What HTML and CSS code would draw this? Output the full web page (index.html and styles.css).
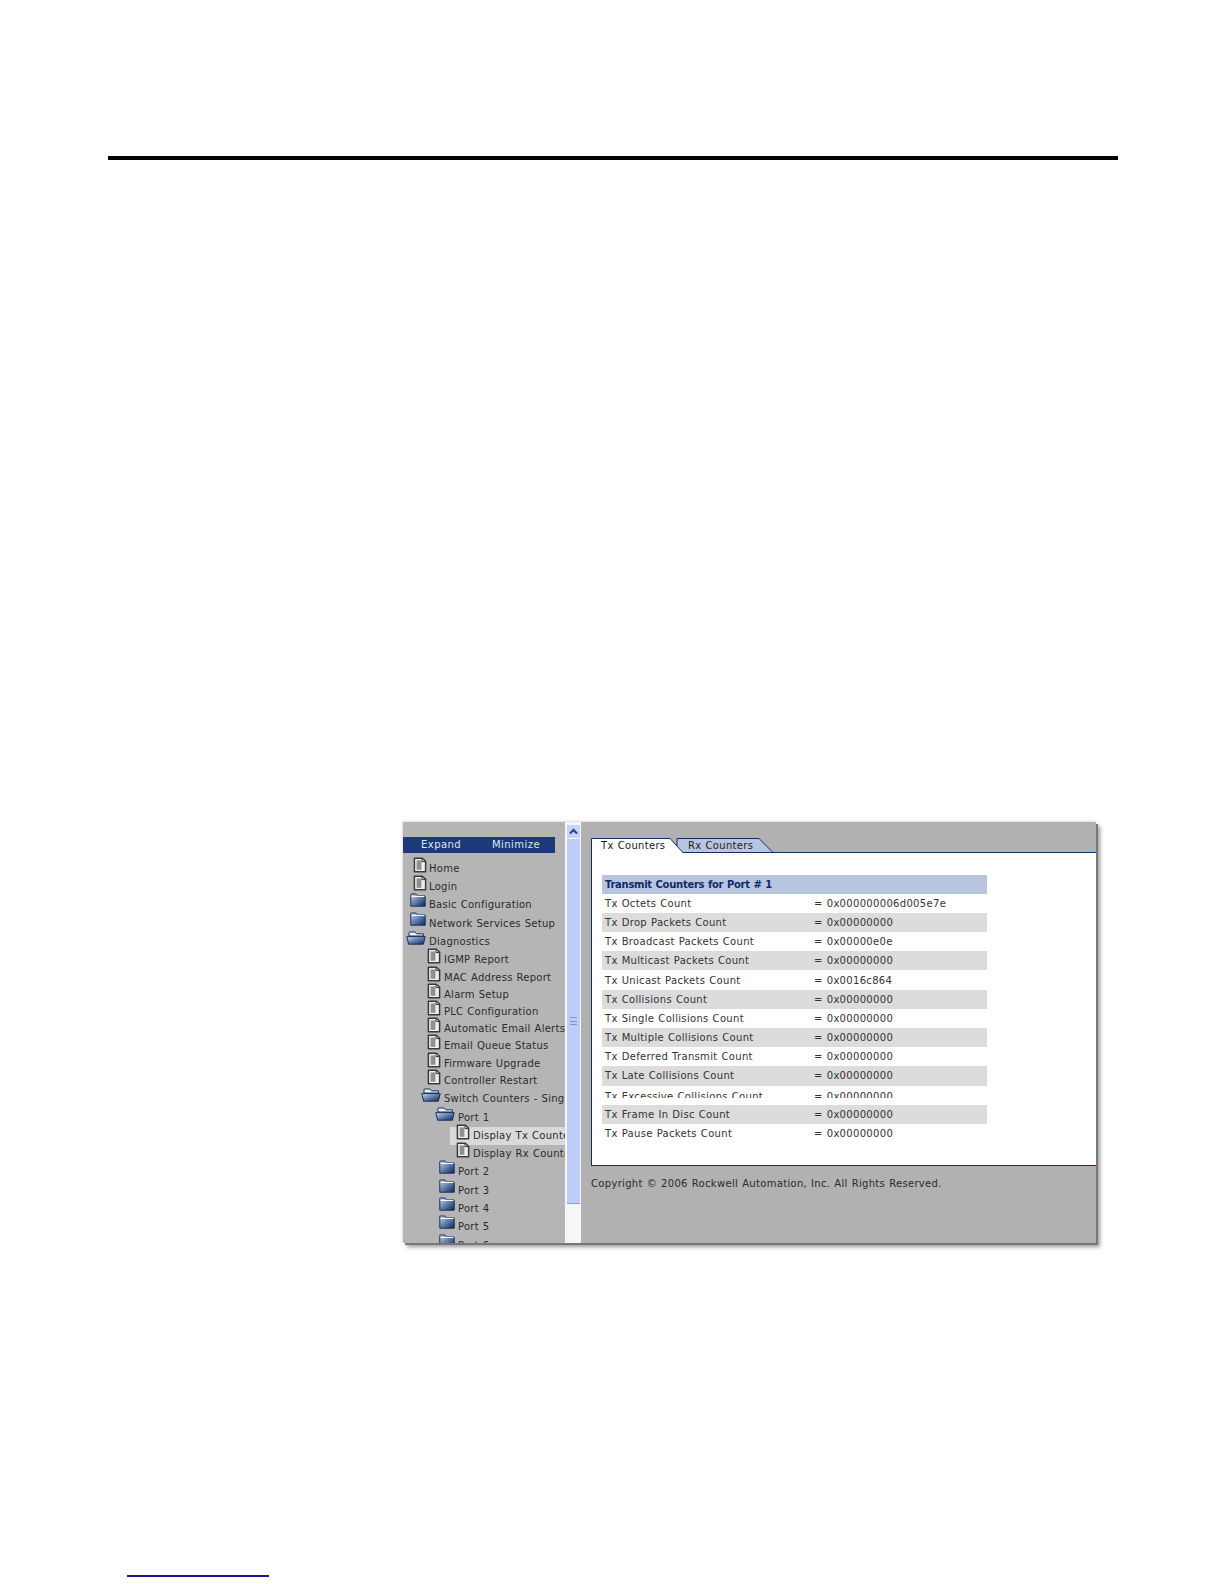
FILE: index.html
```html
<!DOCTYPE html>
<html lang="en">
<head>
    <meta charset="UTF-8">
    <title>Transmit Counters for Port # 1</title>
    <link rel="stylesheet" href="styles.css">
</head>
<body>
    <!-- icon set for the tree -->
    <svg class="defs" width="0" height="0">
        <defs>
            <linearGradient id="folderFill" x1="0" y1="0" x2="1" y2="1">
                <stop offset="0" stop-color="#cfd8e8"/>
                <stop offset="0.45" stop-color="#6d84ae"/>
                <stop offset="1" stop-color="#0c2654"/>
            </linearGradient>
            <symbol id="doc" viewBox="0 0 14 16">
                <path d="M1.4 1.2H9.4L12.6 4.2V14.8H1.4Z" fill="#efefef" stroke="#3a3a3a" stroke-width="1.5" stroke-linejoin="round"/>
                <path d="M3.6 3.4H8.4V12.8H3.6Z" fill="#8f8f8f"/>
                <path d="M9 1.4V4.6H12.4" fill="none" stroke="#3a3a3a"/>
            </symbol>
            <symbol id="folder" viewBox="0 0 16 14">
                <path d="M.8 13.2V1.6Q.8 1 1.4 1H6L7.6 2.8H14.6Q15.2 2.8 15.2 3.4V13.2Z" fill="url(#folderFill)" stroke="#16305f"/>
                <path d="M1.6 3.4H14.4" fill="none" stroke="#f4f6fa" stroke-width="1.2"/>
            </symbol>
            <symbol id="folderOpen" viewBox="0 0 20 14">
                <path d="M3 5V1.6Q3 1 3.6 1H9L10.6 2.8H17.4V5Z" fill="#eef1f6" stroke="#16305f"/>
                <path d="M.8 5.6H19.2L17.4 13.2H2.6Z" fill="url(#folderFill)" stroke="#16305f" stroke-linejoin="round"/>
            </symbol>
        </defs>
    </svg>

    <div class="rule"></div>

    <div class="shot">
        <div class="sidebar">
            <div class="tree-bar"><span>Expand</span><span>Minimize</span></div>
            <ul class="tree">
                <li class="row top lv0"><svg class="doc-ico"><use href="#doc"/></svg>Home</li>
                <li class="row top lv0"><svg class="doc-ico"><use href="#doc"/></svg>Login</li>
                <li class="row top lv0"><svg class="folder-ico"><use href="#folder"/></svg>Basic Configuration</li>
                <li class="row top lv0"><svg class="folder-ico"><use href="#folder"/></svg>Network Services Setup</li>
                <li class="row top lv0"><svg class="open-ico"><use href="#folderOpen"/></svg>Diagnostics</li>
                <li class="row sub lv1"><svg class="doc-ico"><use href="#doc"/></svg>IGMP Report</li>
                <li class="row sub lv1"><svg class="doc-ico"><use href="#doc"/></svg>MAC Address Report</li>
                <li class="row sub lv1"><svg class="doc-ico"><use href="#doc"/></svg>Alarm Setup</li>
                <li class="row sub lv1"><svg class="doc-ico"><use href="#doc"/></svg>PLC Configuration</li>
                <li class="row sub lv1"><svg class="doc-ico"><use href="#doc"/></svg>Automatic Email Alerts</li>
                <li class="row sub lv1"><svg class="doc-ico"><use href="#doc"/></svg>Email Queue Status</li>
                <li class="row sub lv1"><svg class="doc-ico"><use href="#doc"/></svg>Firmware Upgrade</li>
                <li class="row sub-end lv1"><svg class="doc-ico"><use href="#doc"/></svg>Controller Restart</li>
                <li class="row switch lv1"><svg class="open-ico"><use href="#folderOpen"/></svg>Switch Counters - Single</li>
                <li class="row port lv2"><svg class="open-ico"><use href="#folderOpen"/></svg>Port 1</li>
                <li class="row sub lv3 current"><svg class="doc-ico"><use href="#doc"/></svg>Display Tx Counters</li>
                <li class="row sub-end lv3"><svg class="doc-ico"><use href="#doc"/></svg>Display Rx Counters</li>
                <li class="row top lv2"><svg class="folder-ico"><use href="#folder"/></svg>Port 2</li>
                <li class="row top lv2"><svg class="folder-ico"><use href="#folder"/></svg>Port 3</li>
                <li class="row top lv2"><svg class="folder-ico"><use href="#folder"/></svg>Port 4</li>
                <li class="row top lv2"><svg class="folder-ico"><use href="#folder"/></svg>Port 5</li>
                <li class="row top lv2"><svg class="folder-ico"><use href="#folder"/></svg>Port 6</li>
            </ul>
        </div>

        <div class="scrollbar">
            <div class="scroll-btn">
                <svg width="9" height="7" viewBox="0 0 9 7"><path d="M1 5.5L4.5 2L8 5.5" fill="none" stroke="#2b3f6e" stroke-width="2"/></svg>
            </div>
            <div class="scroll-thumb"><span class="grip"></span></div>
        </div>

        <div class="main">
            <div class="tabs">
                <svg class="tab-shape" width="200" height="16" viewBox="0 0 200 16">
                    <path d="M86 15.5V.5H168L182 14.5H92Z" fill="#b8c5de" stroke="#12305f"/>
                    <path d="M.5 16V.5H79L92 15V16Z" fill="#fff"/>
                    <path d="M.5 16V.5H79L92 14.6" fill="none" stroke="#12305f"/>
                </svg>
                <span class="tab tab-on">Tx Counters</span>
                <span class="tab">Rx Counters</span>
            </div>
            <div class="panel">
                <table class="counters">
                    <colgroup><col class="col-label"><col></colgroup>
                    <tr class="head"><th colspan="2">Transmit Counters for Port # 1</th></tr>
                    <tr><td>Tx Octets Count</td><td>= 0x000000006d005e7e</td></tr>
                    <tr class="alt"><td>Tx Drop Packets Count</td><td>= 0x00000000</td></tr>
                    <tr><td>Tx Broadcast Packets Count</td><td>= 0x00000e0e</td></tr>
                    <tr class="alt"><td>Tx Multicast Packets Count</td><td>= 0x00000000</td></tr>
                    <tr><td>Tx Unicast Packets Count</td><td>= 0x0016c864</td></tr>
                    <tr class="alt"><td>Tx Collisions Count</td><td>= 0x00000000</td></tr>
                    <tr><td>Tx Single Collisions Count</td><td>= 0x00000000</td></tr>
                    <tr class="alt"><td>Tx Multiple Collisions Count</td><td>= 0x00000000</td></tr>
                    <tr><td>Tx Deferred Transmit Count</td><td>= 0x00000000</td></tr>
                    <tr class="alt"><td>Tx Late Collisions Count</td><td>= 0x00000000</td></tr>
                    <tr class="cut"><td><div>Tx Excessive Collisions Count</div></td><td><div>= 0x00000000</div></td></tr>
                    <tr class="alt"><td>Tx Frame In Disc Count</td><td>= 0x00000000</td></tr>
                    <tr><td>Tx Pause Packets Count</td><td>= 0x00000000</td></tr>
                </table>
            </div>
            <p class="copyright">Copyright © 2006 Rockwell Automation, Inc. All Rights Reserved.</p>
        </div>
    </div>

    <div class="foot-line"></div>
</body>
</html>
```

FILE: styles.css
```css
body {
    margin: 0;
    background: #fff;
    font-family: "DejaVu Sans", sans-serif;
    font-size: 10px;
    letter-spacing: 0.32px;
    word-spacing: 0.5px;
    color: #333;
}

.defs {
    position: absolute;
}

.rule {
    width: 1010px;
    height: 4px;
    margin: 156px 0 0 108px;
    background: #000;
}

/* screenshot block */
.shot {
    display: flex;
    width: 693px;
    height: 421px;
    margin: 662px 0 0 403px;
    background: #b1b1b1;
    box-shadow: 2px 2px 0 #777, 4px 4px 4px #999, -1px -1px 2px #ddd;
}

/* tree */
.sidebar {
    width: 162px;
    flex-shrink: 0;
    padding-top: 15px;
    overflow: hidden;
    background: #b5b5b5;
    box-sizing: border-box;
}

.tree-bar {
    display: flex;
    justify-content: space-between;
    width: 152px;
    height: 16px;
    padding: 0 15px 0 18px;
    box-sizing: border-box;
    background: #1c3a78;
    color: #dfe6f5;
    letter-spacing: 0.45px;
    line-height: 16px;
}

.tree {
    list-style: none;
    margin: 6.5px 0 0;
    padding: 0;
    color: #2b2b2b;
    letter-spacing: 0.26px;
}

.row {
    position: relative;
    white-space: nowrap;
    box-sizing: border-box;
    line-height: 18.5px;
}

.top { height: 18.4px; }
.sub { height: 17.2px; }
.switch { height: 19px; }
.sub-end { height: 18.6px; }
.port { height: 18px; }

.lv0 { padding-left: 26px; }
.lv1 { padding-left: 41px; }
.lv2 { padding-left: 55px; }
.lv3 { padding-left: 70px; }

.current {
    margin-left: 47px;
    padding-left: 23px;
    background: #d9d9d9;
}

.row svg {
    position: absolute;
}

.doc-ico {
    width: 14px;
    height: 16px;
    top: -3px;
}

.folder-ico {
    width: 16px;
    height: 14px;
    top: -3px;
}

.open-ico {
    width: 20px;
    height: 14px;
    top: -2px;
}

.lv0 .doc-ico { left: 10px; }
.lv0 .folder-ico { left: 7px; }
.lv0 .open-ico { left: 3px; }
.lv1 .doc-ico { left: 24px; }
.lv1 .open-ico { left: 18px; }
.lv2 .folder-ico { left: 36px; }
.lv2 .open-ico { left: 32px; }
.lv3 .doc-ico { left: 53px; }
.current .doc-ico { left: 6px; }

/* scrollbar */
.scrollbar {
    width: 16px;
    flex-shrink: 0;
    padding: 3px 1px 0 2px;
    box-sizing: border-box;
    background: #f6f6f8;
}

.scroll-btn {
    display: flex;
    align-items: center;
    justify-content: center;
    height: 13px;
    background: #c6d3f6;
    border-bottom: 1px solid #fff;
}

.scroll-thumb {
    display: flex;
    align-items: center;
    justify-content: center;
    height: 364px;
    background: #bdcdf7;
    border-bottom: 1px solid #8a9cc4;
}

.grip {
    width: 7px;
    height: 6px;
    border-top: 1px solid #7f93c4;
    border-bottom: 1px solid #7f93c4;
    background: linear-gradient(#7f93c4, #7f93c4) center / 100% 1px no-repeat;
}

/* right side */
.main {
    flex: 1;
    min-width: 0;
    padding: 16px 0 0 10px;
}

.tabs {
    position: relative;
    display: flex;
    height: 14px;
    line-height: 16px;
}

.tab-shape {
    position: absolute;
    left: 0;
    top: 0;
}

.tab {
    position: relative;
    color: #222;
}

.tab-on {
    width: 97px;
    padding-left: 10px;
    box-sizing: border-box;
}

.panel {
    height: 314px;
    padding-top: 21.5px;
    box-sizing: border-box;
    background: #fff;
    border: 1px solid #12305f;
    border-right: 0;
}

.counters {
    width: 385px;
    margin-left: 10px;
    border-collapse: collapse;
    table-layout: fixed;
}

.col-label {
    width: 209px;
}

.counters th {
    height: 19.2px;
    padding: 0 0 0 3px;
    background: #b8c5de;
    color: #0c2c6c;
    font-size: 10px;
    letter-spacing: -0.28px;
    text-align: left;
}

.counters td {
    height: 19.2px;
    padding: 0 0 0 3px;
    white-space: nowrap;
}

.alt td {
    background: #dcdcdc;
}

/* this row is cut off by the row below in the original */
.counters .cut td {
    vertical-align: bottom;
}

.cut div {
    height: 8px;
    margin-bottom: 7px;
    overflow: hidden;
    line-height: 13px;
}

.copyright {
    margin: 12px 0 0;
    color: #2b2b2b;
}

.foot-line {
    width: 142px;
    height: 2px;
    margin: 332px 0 0 127px;
    background: #1a1a8c;
}
```
